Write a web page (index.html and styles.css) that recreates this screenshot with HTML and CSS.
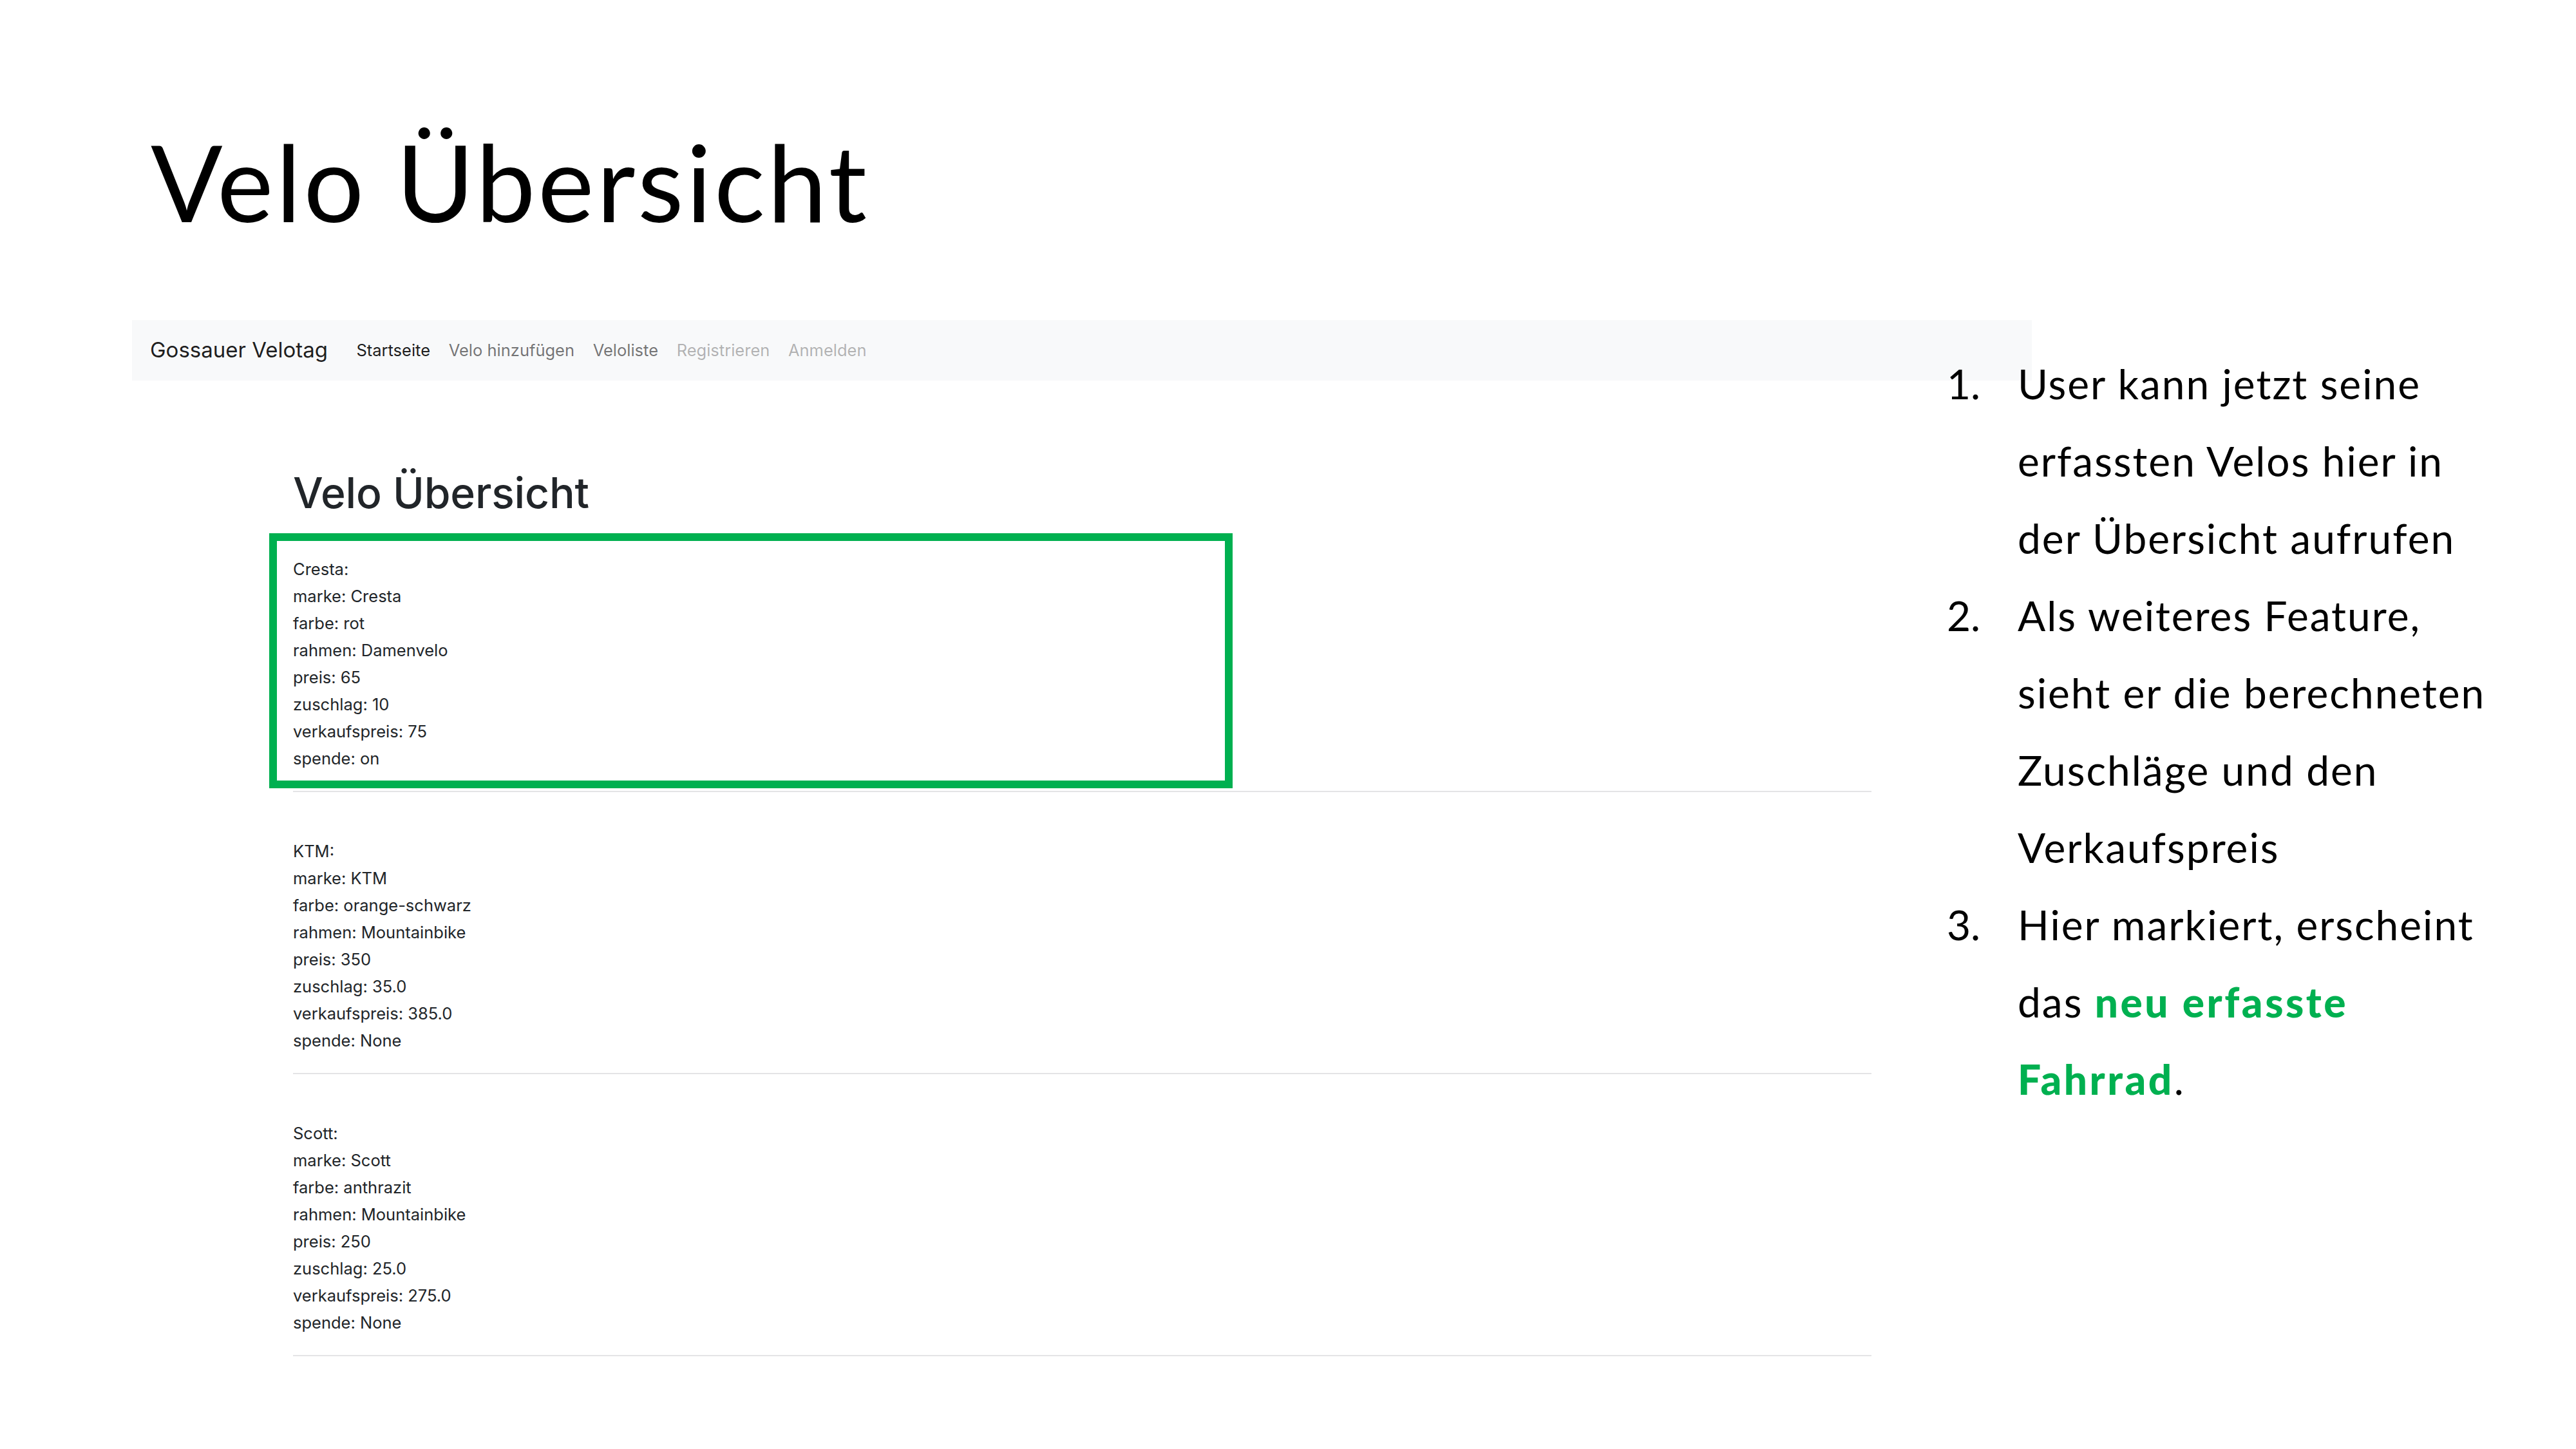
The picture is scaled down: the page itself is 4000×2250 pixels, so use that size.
FILE: index.html
```
<!DOCTYPE html>
<html lang="de">
<head>
<meta charset="utf-8">
<title>Velo Übersicht</title>
<link rel="stylesheet" href="styles.css">
</head>
<body>
<div class="slide">
  <h1 class="slide-title">Velo Übersicht</h1>
  <div class="stage">
    <div class="shot">
      <nav class="navbar">
        <span class="brand">Gossauer Velotag</span>
        <ul class="nav">
          <li class="active">Startseite</li>
          <li>Velo hinzufügen</li>
          <li>Veloliste</li>
          <li class="disabled">Registrieren</li>
          <li class="disabled">Anmelden</li>
        </ul>
      </nav>
      <main class="container">
        <h2 class="page-title">Velo Übersicht</h2>
        <div class="item highlight">
          <div>Cresta:</div>
          <div>marke: Cresta</div>
          <div>farbe: rot</div>
          <div>rahmen: Damenvelo</div>
          <div>preis: 65</div>
          <div>zuschlag: 10</div>
          <div>verkaufspreis: 75</div>
          <div>spende: on</div>
        </div>
        <hr class="sep">
        <div class="item">
          <div>KTM:</div>
          <div>marke: KTM</div>
          <div>farbe: orange-schwarz</div>
          <div>rahmen: Mountainbike</div>
          <div>preis: 350</div>
          <div>zuschlag: 35.0</div>
          <div>verkaufspreis: 385.0</div>
          <div>spende: None</div>
        </div>
        <hr class="sep">
        <div class="item">
          <div>Scott:</div>
          <div>marke: Scott</div>
          <div>farbe: anthrazit</div>
          <div>rahmen: Mountainbike</div>
          <div>preis: 250</div>
          <div>zuschlag: 25.0</div>
          <div>verkaufspreis: 275.0</div>
          <div>spende: None</div>
        </div>
        <hr class="sep">
      </main>
    </div>
    <ol class="notes">
      <li><span class="num">1.</span><span class="txt">User kann jetzt seine<br>erfassten Velos hier in<br>der Übersicht aufrufen</span></li>
      <li><span class="num">2.</span><span class="txt">Als weiteres Feature,<br>sieht er die berechneten<br>Zuschläge und den<br>Verkaufspreis</span></li>
      <li><span class="num">3.</span><span class="txt">Hier markiert, erscheint<br>das <strong class="hl">neu erfasste<br>Fahrrad</strong>.</span></li>
    </ol>
  </div>
</div>
</body>
</html>
```

FILE: styles.css
```
html, body {
  margin: 0;
  padding: 0;
  background: #ffffff;
}

.slide {
  width: 4000px;
  height: 2250px;
  box-sizing: border-box;
  padding-top: 182px;
  overflow: hidden;
  position: relative;
}

.slide-title {
  margin: 0 0 117px 234px;
  font-family: "Lato", "Open Sans", sans-serif;
  font-weight: 400;
  font-size: 165px;
  line-height: 198px;
  color: #000000;
  letter-spacing: 4px;
}

.stage {
  display: grid;
  grid-template-columns: 205px 2818px 132px 1fr;
  align-items: start;
}

.shot {
  grid-column: 2 / 4;
  grid-row: 1;
}

.navbar {
  display: flex;
  align-items: center;
  height: 94px;
  padding-left: 28px;
  background: #f8f9fa;
  font-family: "Inter", "Liberation Sans", sans-serif;
}

.brand {
  font-size: 33px;
  line-height: 1.5;
  color: rgba(0, 0, 0, 0.9);
  margin-right: 30px;
}

.nav {
  display: flex;
  list-style: none;
  margin: 0;
  padding: 0;
  font-size: 25.5px;
  line-height: 1.5;
}

.nav li {
  padding: 0 14.3px;
  color: rgba(0, 0, 0, 0.55);
}

.nav li.active {
  color: rgba(0, 0, 0, 0.9);
}

.nav li.disabled {
  color: rgba(0, 0, 0, 0.3);
}

.container {
  padding-left: 250px;
  width: 2451px;
  font-family: "Inter", "Liberation Sans", sans-serif;
  color: #212529;
}

.page-title {
  margin: 135px 0 23px;
  font-size: 66px;
  font-weight: 500;
  line-height: 1.2;
  letter-spacing: -0.2px;
}

.item {
  padding: 71px 0 29px;
  font-size: 25.5px;
  line-height: 42px;
}

.item.highlight {
  margin-left: -37px;
  width: 1496px;
  box-sizing: border-box;
  border: 12px solid #00b050;
  padding: 23px 0 13px 25px;
}

.sep {
  margin: 0;
  border: 0;
  height: 2px;
  background: #e4e4e6;
}

.highlight + .sep {
  margin-top: 4px;
}

.notes {
  grid-column: 3 / 5;
  grid-row: 1;
  margin: 39px 0 0;
  padding: 0;
  list-style: none;
  font-family: "Lato", "Open Sans", sans-serif;
  font-size: 64px;
  line-height: 120px;
  color: #000000;
}

.notes li {
  display: flex;
}

.num {
  flex: none;
  width: 110px;
}

.txt {
  white-space: nowrap;
  letter-spacing: 2px;
}

.hl {
  color: #00b050;
  font-weight: 900;
  letter-spacing: 3.5px;
}
```
